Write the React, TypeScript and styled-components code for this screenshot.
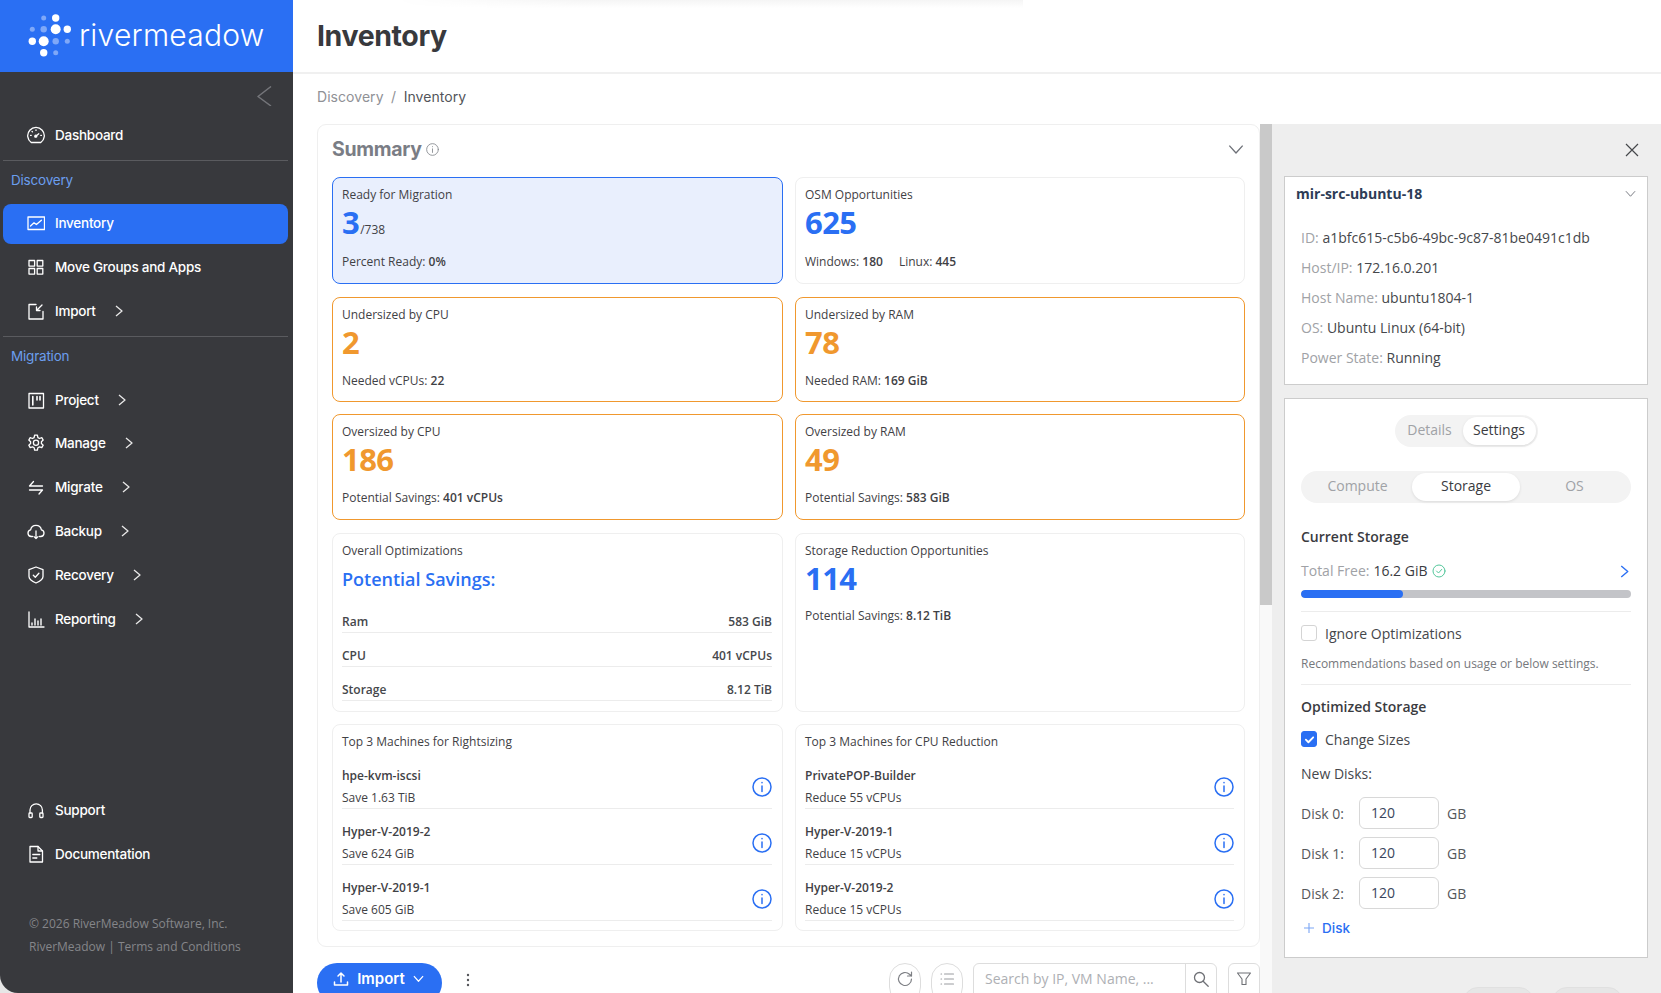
import React from 'react';
import styled, { createGlobalStyle } from 'styled-components';

const Global = createGlobalStyle`
  html, body { margin: 0; padding: 0; height: 100%; overflow: hidden; background: #e6e6e6; }
  * { box-sizing: border-box; }
  body { font-family: "Open Sans", "Liberation Sans", sans-serif; color: #3a3b3f; }
`;

const BLUE = '#2a6ff3';
const ORANGE = '#f0982e';

const Page = styled.div`
  display: flex;
  width: 1661px;
  height: 993px;
  overflow: hidden;
  background: #e6e6e6;
`;

const Sidebar = styled.aside`
  width: 293px;
  flex: none;
  height: 993px;
  background: #38393d;
  border-bottom-left-radius: 18px;
  display: flex;
  flex-direction: column;
  font-family: Inter, "Liberation Sans", sans-serif;
  overflow: hidden;
`;

const LogoBar = styled.div`
  height: 72px;
  flex: none;
  background: ${BLUE};
  display: flex;
  align-items: center;
  padding-left: 27px;
  gap: 6px;
`;

const LogoText = styled.span`
  font-family: Inter, "Liberation Sans", sans-serif;
  font-weight: 300;
  font-size: 30px;
  letter-spacing: 0.25px;
  color: #fff;
  line-height: 40px;
  margin-top: -2px;
`;

const CollapseRow = styled.div`
  height: 41px;
  flex: none;
  display: flex;
  justify-content: flex-end;
  align-items: center;
  padding-right: 16px;
  padding-top: 7px;
`;

const NavRow = styled.div<{ $active?: boolean }>`
  height: ${p => (p.$active ? '40px' : '43.8px')};
  flex: none;
  display: flex;
  align-items: center;
  margin: 0 5px ${p => (p.$active ? '1.3px' : '0')} 3px;
  padding: 0 0 ${p => (p.$active ? '1px' : '0')} 24px;
  border-radius: 8px;
  background: ${p => (p.$active ? BLUE : 'transparent')};
  color: #fff;
  font-size: 13.5px;
  font-weight: 500;
  letter-spacing: -0.25px;
`;

const NavIcon = styled.span`
  width: 18px;
  height: 18px;
  margin-right: 10px;
  display: flex;
  flex: none;
`;

const NavCaret = styled.span`
  margin-left: 17px;
  display: flex;
`;

const NavRule = styled.div`
  height: 1px;
  flex: none;
  background: #5a5b5f;
  margin: 3px 5px 0 3px;
`;

const SectionLabel = styled.div<{ $after: number }>`
  height: 36px;
  flex: none;
  display: flex;
  align-items: center;
  padding: 2px 0 0 11px;
  color: #6b9eee;
  font-size: 13.5px;
  letter-spacing: -0.2px;
  margin-bottom: ${p => p.$after}px;
`;

const SideBottom = styled.div`
  margin-top: auto;
  display: flex;
  flex-direction: column;
`;

const SideFooter = styled.div`
  margin-top: 37px;
  padding: 0 0 35px 29px;
  font-family: "Open Sans", "Liberation Sans", sans-serif;
  font-size: 12px;
  line-height: 22.5px;
  color: #85868a;
`;

const Main = styled.main`
  flex: 1;
  min-width: 0;
  display: flex;
  flex-direction: column;
  background: #fff;
  position: relative;
`;

const TopShade = styled.div`
  position: absolute;
  left: 100px;
  top: 0;
  width: 630px;
  height: 8px;
  background: linear-gradient(to bottom, #f5f5f5, #ffffff);
  mask-image: linear-gradient(to right, transparent, #000 30%);
`;

const TitleBar = styled.header`
  height: 74px;
  flex: none;
  border-bottom: 2px solid #f0f0f0;
  display: flex;
  align-items: center;
  padding: 0 0 2px 24px;
`;

const PageTitle = styled.h1`
  margin: 0;
  font-family: Inter, "Liberation Sans", sans-serif;
  font-weight: 700;
  font-size: 28.5px;
  letter-spacing: -0.4px;
  color: #38393d;
  position: relative;
`;

const Crumbs = styled.nav`
  height: 50px;
  flex: none;
  display: flex;
  align-items: center;
  padding: 0 0 6px 24px;
  font-family: Inter, "Liberation Sans", sans-serif;
  font-size: 14px;
  letter-spacing: 0.05px;
  gap: 7.5px;
  color: #8f9196;
`;

const CrumbNow = styled.span`
  color: #53555a;
`;

const Work = styled.div`
  flex: 1;
  min-height: 0;
  display: flex;
`;

const LeftCol = styled.div`
  width: 967px;
  flex: none;
  padding-left: 24px;
  display: flex;
  flex-direction: column;
`;

const SummaryCard = styled.section`
  height: 823px;
  flex: none;
  border: 1px solid #efefef;
  border-radius: 9px;
  padding: 0 14px;
`;

const SummaryHead = styled.div`
  height: 52px;
  display: flex;
  align-items: center;
  padding-bottom: 4px;
`;

const SummaryTitle = styled.h2`
  margin: 0 4px 0 0;
  font-family: Inter, "Liberation Sans", sans-serif;
  font-size: 19.5px;
  font-weight: 700;
  letter-spacing: -0.3px;
  color: #7a7d85;
`;

const HeadCaret = styled.span`
  margin-left: auto;
  display: flex;
  padding-right: 1px;
`;

const Grid = styled.div`
  display: grid;
  grid-template-columns: 451px 450px;
  grid-template-rows: 107px 105px 106px 179px 207px;
  column-gap: 12px;
  row-gap: 12.5px;
`;

const Tile = styled.div<{ $tone?: 'blue' | 'orange' }>`
  border: 1px solid ${p => (p.$tone === 'blue' ? BLUE : p.$tone === 'orange' ? ORANGE : '#efefef')};
  background: ${p => (p.$tone === 'blue' ? '#e9effd' : '#fff')};
  border-radius: 8px;
  padding: 8px 10px 0 9px;
  font-size: 12px;
  line-height: 18px;
  color: #3f4145;
`;

const TileLabel = styled.div`
  height: 18px;
`;

const BigNum = styled.div<{ $orange?: boolean }>`
  height: 40px;
  line-height: 36px;
  font-size: 31px;
  font-weight: 700;
  letter-spacing: -0.6px;
  color: ${p => (p.$orange ? ORANGE : BLUE)};
`;

const Small = styled.span`
  font-size: 12px;
  font-weight: 400;
  letter-spacing: 0;
  color: #3f4145;
  margin-left: 1px;
`;

const TileFoot = styled.div<{ $mt: number }>`
  margin-top: ${p => p.$mt}px;
  display: flex;
  gap: 16px;
  b { font-weight: 600; }
`;

const SavingsHead = styled.div`
  height: 40px;
  line-height: 38px;
  font-size: 18px;
  font-weight: 600;
  color: ${BLUE};
`;

const SavingRow = styled.div`
  height: 34px;
  border-bottom: 1px solid #ececec;
  display: flex;
  justify-content: space-between;
  align-items: flex-end;
  padding-bottom: 1px;
  font-weight: 600;
  color: #45474b;
`;

const SavingRows = styled.div`
  margin-top: -1px;
`;

const TopRow = styled.div`
  height: 56px;
  border-bottom: 1px solid #ececec;
  display: flex;
  justify-content: space-between;
  align-items: flex-start;
  padding-top: 12px;
`;

const TopList = styled.div`
  margin-top: 2px;
`;

const TopText = styled.div`
  line-height: 22px;
  b { display: block; font-weight: 600; }
`;

const TopInfo = styled.span`
  display: flex;
  margin-top: 12px;
`;

const Toolbar = styled.div`
  margin-top: 16px;
  height: 40px;
  flex: none;
  display: flex;
  align-items: flex-start;
`;

const ImportBtn = styled.button`
  width: 125px;
  height: 40px;
  border: 0;
  border-radius: 20px;
  background: ${BLUE};
  color: #fff;
  font-family: Inter, "Liberation Sans", sans-serif;
  font-size: 15px;
  font-weight: 600;
  display: flex;
  align-items: center;
  justify-content: center;
  gap: 8px;
  padding: 0 2px 9px 0;
`;

const Dots = styled.span`
  margin-left: 24px;
  margin-top: 9px;
  display: flex;
`;

const RoundBtn = styled.span<{ $first?: boolean }>`
  width: 32px;
  height: 40px;
  border: 1px solid #ddd;
  border-radius: 16px;
  display: flex;
  align-items: flex-start;
  justify-content: center;
  padding-top: 6px;
  margin-left: ${p => (p.$first ? 'auto' : '10px')};
`;

const SearchBox = styled.div`
  width: 244px;
  height: 40px;
  margin-left: 10px;
  border: 1px solid #ddd;
  border-radius: 6px;
  display: flex;
`;

const SearchInput = styled.input`
  width: 212px;
  height: 100%;
  border: 0;
  border-right: 1px solid #ddd;
  outline: 0;
  padding: 0 11px 9px;
  background: transparent;
  font-family: "Open Sans", "Liberation Sans", sans-serif;
  font-size: 14px;
  &::placeholder { color: #aeb0b4; opacity: 1; }
`;

const SearchIconWrap = styled.span`
  flex: 1;
  display: flex;
  justify-content: center;
  padding-top: 6px;
`;

const FilterBtn = styled.span`
  width: 32px;
  height: 40px;
  margin-left: 11px;
  border: 1px solid #ddd;
  border-radius: 6px;
  display: flex;
  justify-content: center;
  padding-top: 7px;
`;

const ScrollTrack = styled.div`
  width: 12px;
  flex: none;
  background: #f9f9f9;
`;

const ScrollThumb = styled.div`
  height: 481px;
  background: #c9c9c9;
`;

const Panel = styled.aside`
  flex: 1;
  background: #eeeeee;
  padding: 0 14px 0 12px;
  display: flex;
  flex-direction: column;
  font-size: 14px;
`;

const CloseRow = styled.div`
  height: 52px;
  flex: none;
  display: flex;
  justify-content: flex-end;
  align-items: center;
`;

const CloseIcon = styled.span`
  display: flex;
  margin-right: 9px;
`;

const InfoCard = styled.div`
  height: 209px;
  flex: none;
  background: #fff;
  border: 1px solid #ccc;
`;

const InfoHead = styled.div`
  display: flex;
  justify-content: space-between;
  align-items: center;
  height: 32px;
  padding: 0 11px 0 11px;
  font-weight: 700;
  font-size: 14px;
  color: #2d3c56;
`;

const InfoRows = styled.div`
  margin-top: 14px;
  padding-left: 16px;
`;

const InfoRow = styled.div`
  height: 30px;
  line-height: 30px;
  color: #45474b;
  white-space: nowrap;
  span { color: #a0a2a6; }
`;

const SettingsCard = styled.div`
  height: 560px;
  flex: none;
  margin-top: 13px;
  background: #fff;
  border: 1px solid #ccc;
  padding: 16px 16px 0;
`;

const Segment = styled.div<{ $wide?: boolean; $top?: number }>`
  display: ${p => (p.$wide ? 'grid' : 'flex')};
  ${p => (p.$wide ? 'grid-template-columns: 1fr 108px 1fr;' : '')}
  width: ${p => (p.$wide ? '330px' : '143px')};
  height: 32px;
  margin: ${p => p.$top ?? 0}px auto 0;
  padding: 2px;
  background: #f3f3f3;
  border-radius: 16px;
`;

const SegItem = styled.div<{ $on?: boolean; $w?: number }>`
  ${p => (p.$w ? `width: ${p.$w}px;` : '')}
  display: flex;
  align-items: center;
  justify-content: center;
  padding-bottom: 3px;
  border-radius: 14px;
  background: ${p => (p.$on ? '#fff' : 'transparent')};
  color: ${p => (p.$on ? '#3a3b3f' : '#a0a2a6')};
  box-shadow: ${p => (p.$on ? '0 1px 3px rgba(0,0,0,.1)' : 'none')};
`;

const Heading = styled.div<{ $top: number }>`
  height: 20px;
  line-height: 20px;
  margin-top: ${p => p.$top}px;
  font-weight: 600;
  color: #3a3b3f;
`;

const TotalRow = styled.div`
  height: 20px;
  line-height: 20px;
  margin-top: 14px;
  display: flex;
  align-items: center;
  color: #a0a2a6;
  b { font-weight: 400; color: #3a3b3f; margin-left: 4px; margin-right: 4px; }
`;

const TotalCaret = styled.span`
  margin-left: auto;
  display: flex;
`;

const Bar = styled.div`
  height: 8px;
  margin-top: 9px;
  border-radius: 4px;
  background: #c3c4c8;
  overflow: hidden;
`;

const BarFill = styled.div`
  height: 100%;
  border-radius: 4px;
  background: ${BLUE};
`;

const Rule = styled.div<{ $top: number }>`
  height: 1px;
  margin-top: ${p => p.$top}px;
  background: #ececec;
`;

const CheckRow = styled.div<{ $top: number }>`
  height: 20px;
  margin-top: ${p => p.$top}px;
  display: flex;
  align-items: center;
  gap: 8px;
  color: #45474b;
`;

const Check = styled.span<{ $on?: boolean }>`
  width: 16px;
  height: 16px;
  border-radius: 3px;
  border: 1px solid ${p => (p.$on ? BLUE : '#d4d4d4')};
  background: ${p => (p.$on ? BLUE : '#fff')};
  display: flex;
  align-items: center;
  justify-content: center;
`;

const Hint = styled.div`
  height: 18px;
  line-height: 18px;
  margin-top: 12px;
  font-size: 12px;
  color: #76787c;
`;

const FieldLabel = styled.div`
  height: 20px;
  line-height: 20px;
  margin-top: 15px;
  color: #45474b;
`;

const DiskRows = styled.div`
  margin-top: 13px;
  display: flex;
  flex-direction: column;
  gap: 8px;
`;

const DiskRow = styled.div`
  height: 32px;
  display: flex;
  align-items: center;
  color: #55575b;
`;

const DiskName = styled.span`
  width: 58px;
`;

const DiskInput = styled.input`
  width: 80px;
  height: 32px;
  border: 1px solid #d8d8d8;
  border-radius: 6px;
  padding: 0 11px 1px;
  margin-right: 8px;
  font-family: "Open Sans", "Liberation Sans", sans-serif;
  font-size: 14px;
  color: #39465c;
  outline: 0;
`;

const AddDisk = styled.div`
  height: 20px;
  margin-top: 9px;
  display: flex;
  align-items: center;
  gap: 7px;
  padding-left: 2px;
  font-family: Inter, "Liberation Sans", sans-serif;
  font-size: 13.5px;
  font-weight: 500;
  color: ${BLUE};
`;

const PanelButtons = styled.div`
  margin-top: 29px;
  display: flex;
  justify-content: flex-end;
  gap: 18px;
  padding-right: 25px;
`;

const PanelBtn = styled.span`
  width: 71px;
  height: 30px;
  border-radius: 15px;
  background: #e6e6e6;
  border: 1px solid #e0e0e0;
`;

type P = { children: React.ReactNode; size?: number; color?: string; sw?: number; box?: number };
const Ico = ({ children, size = 18, color = '#fff', sw = 1.3, box = 18 }: P) => (
  <svg width={size} height={size} viewBox={`0 0 ${box} ${box}`} fill="none" stroke={color} strokeWidth={sw} strokeLinecap="round" strokeLinejoin="round">
    {children}
  </svg>
);

const Logo = () => (
  <svg width="46" height="48" viewBox="27 12 46 48">
    <g fill="#fff">
      <circle cx="55.7" cy="18" r="3.7" />
      <circle cx="55.7" cy="29.3" r="5" />
      <circle cx="67.3" cy="29.3" r="3.7" />
      <circle cx="43.7" cy="41.3" r="5" />
      <circle cx="32.3" cy="41.3" r="3.7" />
      <circle cx="43.7" cy="52.7" r="3.7" />
    </g>
    <g fill="#7fa8f8">
      <circle cx="43.7" cy="18" r="2.5" />
      <circle cx="32.3" cy="29.3" r="2.5" />
      <circle cx="43.7" cy="29.3" r="3.2" />
      <circle cx="55.7" cy="41.3" r="3.2" />
      <circle cx="67.3" cy="41.3" r="2.5" />
      <circle cx="55.7" cy="52.7" r="2.5" />
    </g>
  </svg>
);

const Gauge = () => (
  <Ico>
    <path d="M4.2 16.5h9.6a8.3 8.3 0 1 0-9.6 0z" />
    <path d="M8.2 10.8l3.6-3" />
    <circle cx="8.8" cy="10.2" r="1" />
    <path d="M3.6 9.4h.6M9 3.8v.6M5 5.4l.4.4M13.8 9.4h.6" />
  </Ico>
);
const Chart = () => (
  <Ico>
    <rect x="1" y="3" width="16.5" height="12.5" />
    <path d="M3.5 12l3.5-3.2 2.4 1.8 5-4.4" />
  </Ico>
);
const Apps = () => (
  <Ico>
    <rect x="2" y="2.5" width="5.6" height="5.6" />
    <rect x="10.2" y="2.5" width="5.6" height="5.6" />
    <rect x="2" y="10.5" width="5.6" height="5.6" />
    <rect x="10.2" y="10.5" width="5.6" height="5.6" />
  </Ico>
);
const ImportIco = () => (
  <Ico>
    <path d="M9 2.5H2v14.5h14V9.5" />
    <path d="M15 3l-5.5 5.5M9.5 5v3.5H13" />
  </Ico>
);
const Board = () => (
  <Ico>
    <rect x="2" y="2.5" width="14.5" height="14.5" />
    <path d="M5.8 5.5v8.5M10 5.5v3.5M13 5.5v3.5" strokeWidth="1.6" />
  </Ico>
);
const Gear = () => (
  <Ico>
    <path d="M7.6 1.2h2.8l.5 2.4 1.6.9 2.3-.8 1.4 2.4-1.8 1.6v1.9l1.8 1.6-1.4 2.4-2.3-.8-1.6.9-.5 2.4H7.6l-.5-2.4-1.6-.9-2.3.8-1.4-2.4 1.8-1.6V7.7L1.8 6.1l1.4-2.4 2.3.8 1.6-.9z" />
    <circle cx="9" cy="8.7" r="2.6" />
  </Ico>
);
const Swap = () => (
  <Ico>
    <path d="M2.5 8h13M2.5 8l4-4.5M2.5 12h13M15.5 12l-3.5 4" />
  </Ico>
);
const Cloud = () => (
  <Ico>
    <path d="M5.5 14.5H4.2A3.4 3.4 0 0 1 3.6 7.8a5.5 5.5 0 0 1 10.8 0 3.4 3.4 0 0 1-.6 6.7h-1.3" />
    <path d="M9 9v7.5M7 14.6l2 2 2-2" />
  </Ico>
);
const Shield = () => (
  <Ico>
    <path d="M9 1l7 2.6v7c0 2.8-3.4 5-7 6.4-3.6-1.4-7-3.6-7-6.4v-7z" />
    <path d="M6.3 9.3l2 2 3.6-4" />
  </Ico>
);
const Bars = () => (
  <Ico>
    <path d="M2 2v15h15" />
    <path d="M5 15v-2M8 15V9M11 15v-4M14 15V9" strokeWidth="1.4" />
  </Ico>
);
const Phones = () => (
  <Ico>
    <path d="M3 12V9a6.2 6.2 0 0 1 12.4 0v3" />
    <rect x="2" y="12" width="3.2" height="4.5" rx=".8" />
    <rect x="12.8" y="12" width="3.2" height="4.5" rx=".8" />
  </Ico>
);
const Doc = () => (
  <Ico>
    <path d="M3 1.5h8l4.5 4.5v11H3z" />
    <path d="M11 1.5V6h4.5M5.8 9.5h7M5.8 13h4" />
  </Ico>
);
const Caret = ({ dir = 'right', color = '#fff', size = 12, sw = 1.3 }: { dir?: string; color?: string; size?: number; sw?: number }) => {
  const d = dir === 'right' ? 'M3 1l6 5-6 5' : dir === 'left' ? 'M9 1L3 6l6 5' : 'M1 3.5l5 5.5 5-5.5';
  return <Ico size={size} box={12} color={color} sw={sw}><path d={d} strokeLinecap="butt" /></Ico>;
};
const InfoCircle = ({ size = 20, color = BLUE, sw = 1.5 }: { size?: number; color?: string; sw?: number }) => (
  <Ico size={size} box={20} color={color} sw={sw}>
    <circle cx="10" cy="10" r="9" />
    <path d="M10 9v5.5" />
    <path d="M10 5.6v.2" />
  </Ico>
);

const navA = [
  { icon: <Apps />, label: 'Move Groups and Apps' },
  { icon: <ImportIco />, label: 'Import', caret: true },
];
const navB = [
  { icon: <Board />, label: 'Project' },
  { icon: <Gear />, label: 'Manage' },
  { icon: <Swap />, label: 'Migrate' },
  { icon: <Cloud />, label: 'Backup' },
  { icon: <Shield />, label: 'Recovery' },
  { icon: <Bars />, label: 'Reporting' },
];

const Nav = ({ icon, label, caret, active }: { icon: React.ReactNode; label: string; caret?: boolean; active?: boolean }) => (
  <NavRow $active={active}>
    <NavIcon>{icon}</NavIcon>
    {label}
    {caret && <NavCaret><Caret color="#e8e8e8" /></NavCaret>}
  </NavRow>
);

const Stat = ({ label, value, foot, orange, sub, mt = 8 }: { label: string; value: string; foot: React.ReactNode; orange?: boolean; sub?: string; mt?: number }) => (
  <>
    <TileLabel>{label}</TileLabel>
    <BigNum $orange={orange}>{value}{sub && <Small>{sub}</Small>}</BigNum>
    <TileFoot $mt={mt}>{foot}</TileFoot>
  </>
);

const TopTile = ({ title, rows }: { title: string; rows: [string, string][] }) => (
  <Tile>
    <TileLabel>{title}</TileLabel>
    <TopList>
      {rows.map(([a, b]) => (
        <TopRow key={a}>
          <TopText><b>{a}</b>{b}</TopText>
          <TopInfo><InfoCircle /></TopInfo>
        </TopRow>
      ))}
    </TopList>
  </Tile>
);

export default function App() {
  return (
    <Page>
      <Global />
      <Sidebar>
        <LogoBar>
          <Logo />
          <LogoText>rivermeadow</LogoText>
        </LogoBar>
        <CollapseRow>
          <Ico size={20} box={20} color="#74757a" sw={1.5}><path d="M14 .5L1 10.5 14 20" strokeLinecap="butt" /></Ico>
        </CollapseRow>
        <Nav icon={<Gauge />} label="Dashboard" />
        <NavRule />
        <SectionLabel $after={7}>Discovery</SectionLabel>
        <Nav icon={<Chart />} label="Inventory" active />
        <Nav {...navA[0]} />
        <Nav {...navA[1]} />
        <NavRule />
        <SectionLabel $after={5}>Migration</SectionLabel>
        {navB.map(n => <Nav key={n.label} icon={n.icon} label={n.label} caret />)}
        <SideBottom>
          <Nav icon={<Phones />} label="Support" />
          <Nav icon={<Doc />} label="Documentation" />
          <SideFooter>
            © 2026 RiverMeadow Software, Inc.<br />
            RiverMeadow | Terms and Conditions
          </SideFooter>
        </SideBottom>
      </Sidebar>

      <Main>
        <TopShade />
        <TitleBar><PageTitle>Inventory</PageTitle></TitleBar>
        <Crumbs>Discovery<span>/</span><CrumbNow>Inventory</CrumbNow></Crumbs>
        <Work>
          <LeftCol>
            <SummaryCard>
              <SummaryHead>
                <SummaryTitle>Summary</SummaryTitle>
                <InfoCircle size={13} color="#8a8d93" sw={1.4} />
                <HeadCaret><Caret dir="down" color="#6e7178" size={16} sw={1} /></HeadCaret>
              </SummaryHead>
              <Grid>
                <Tile $tone="blue">
                  <Stat mt={9} label="Ready for Migration" value="3" sub="/738" foot={<span>Percent Ready: <b>0%</b></span>} />
                </Tile>
                <Tile>
                  <Stat mt={9} label="OSM Opportunities" value="625" foot={<><span>Windows: <b>180</b></span><span>Linux: <b>445</b></span></>} />
                </Tile>
                <Tile $tone="orange">
                  <Stat orange label="Undersized by CPU" value="2" foot={<span>Needed vCPUs: <b>22</b></span>} />
                </Tile>
                <Tile $tone="orange">
                  <Stat orange label="Undersized by RAM" value="78" foot={<span>Needed RAM: <b>169 GiB</b></span>} />
                </Tile>
                <Tile $tone="orange">
                  <Stat orange label="Oversized by CPU" value="186" foot={<span>Potential Savings: <b>401 vCPUs</b></span>} />
                </Tile>
                <Tile $tone="orange">
                  <Stat orange label="Oversized by RAM" value="49" foot={<span>Potential Savings: <b>583 GiB</b></span>} />
                </Tile>
                <Tile>
                  <TileLabel>Overall Optimizations</TileLabel>
                  <SavingsHead>Potential Savings:</SavingsHead>
                  <SavingRows>
                    <SavingRow><span>Ram</span><span>583 GiB</span></SavingRow>
                    <SavingRow><span>CPU</span><span>401 vCPUs</span></SavingRow>
                    <SavingRow><span>Storage</span><span>8.12 TiB</span></SavingRow>
                  </SavingRows>
                </Tile>
                <Tile>
                  <Stat mt={7} label="Storage Reduction Opportunities" value="114" foot={<span>Potential Savings: <b>8.12 TiB</b></span>} />
                </Tile>
                <TopTile title="Top 3 Machines for Rightsizing" rows={[['hpe-kvm-iscsi', 'Save 1.63 TiB'], ['Hyper-V-2019-2', 'Save 624 GiB'], ['Hyper-V-2019-1', 'Save 605 GiB']]} />
                <TopTile title="Top 3 Machines for CPU Reduction" rows={[['PrivatePOP-Builder', 'Reduce 55 vCPUs'], ['Hyper-V-2019-1', 'Reduce 15 vCPUs'], ['Hyper-V-2019-2', 'Reduce 15 vCPUs']]} />
              </Grid>
            </SummaryCard>
            <Toolbar>
              <ImportBtn>
                <Ico size={16} box={16} sw={1.5}><path d="M8 11V2M5 5l3-3 3 3M1.5 11v3h13v-3" /></Ico>
                Import
                <Caret dir="down" size={11} />
              </ImportBtn>
              <Dots>
                <svg width="4" height="16" viewBox="0 0 4 16" fill="#55575b"><circle cx="2" cy="3" r="1.2" /><circle cx="2" cy="8" r="1.2" /><circle cx="2" cy="13" r="1.2" /></svg>
              </Dots>
              <RoundBtn $first>
                <Ico size={18} color="#7d7f84" sw={1.2}><path d="M15.5 9a6.5 6.5 0 1 1-2-4.7L15.5 6M15.5 2v4h-4" /></Ico>
              </RoundBtn>
              <RoundBtn>
                <Ico size={18} color="#9a9ca0" sw={1.1}><path d="M6.5 4h9M6.5 9h9M6.5 14h9M3 4h.6M3 9h.6M3 14h.6" /></Ico>
              </RoundBtn>
              <SearchBox>
                <SearchInput placeholder="Search by IP, VM Name, ..." readOnly />
                <SearchIconWrap>
                  <Ico size={18} color="#6f7176" sw={1.3}><circle cx="7.5" cy="7.5" r="5" /><path d="M11.2 11.2l5 5" /></Ico>
                </SearchIconWrap>
              </SearchBox>
              <FilterBtn>
                <Ico size={16} box={16} color="#6f7176" sw={1.1}><path d="M1.5 2h13l-4.5 6v5.5H6V8z" /></Ico>
              </FilterBtn>
            </Toolbar>
          </LeftCol>
          <ScrollTrack><ScrollThumb /></ScrollTrack>
          <Panel>
            <CloseRow>
              <CloseIcon><Ico size={14} box={14} color="#45474b" sw={1.2}><path d="M1 1l12 12M13 1L1 13" strokeLinecap="butt" /></Ico></CloseIcon>
            </CloseRow>
            <InfoCard>
              <InfoHead>mir-src-ubuntu-18<Caret dir="down" color="#6e7178" size={11} sw={1} /></InfoHead>
              <InfoRows>
                <InfoRow><span>ID:</span> a1bfc615-c5b6-49bc-9c87-81be0491c1db</InfoRow>
                <InfoRow><span>Host/IP:</span> 172.16.0.201</InfoRow>
                <InfoRow><span>Host Name:</span> ubuntu1804-1</InfoRow>
                <InfoRow><span>OS:</span> Ubuntu Linux (64-bit)</InfoRow>
                <InfoRow><span>Power State:</span> Running</InfoRow>
              </InfoRows>
            </InfoCard>
            <SettingsCard>
              <Segment>
                <SegItem $w={66}>Details</SegItem>
                <SegItem $on $w={73}>Settings</SegItem>
              </Segment>
              <Segment $wide $top={24}>
                <SegItem>Compute</SegItem>
                <SegItem $on>Storage</SegItem>
                <SegItem>OS</SegItem>
              </Segment>
              <Heading $top={24}>Current Storage</Heading>
              <TotalRow>
                Total Free: <b>16.2 GiB</b>
                <Ico size={14} box={14} color="#53c79b" sw={1}><circle cx="7" cy="7" r="6" /><path d="M4.5 7l2 2 3.2-3.6" /></Ico>
                <TotalCaret><Caret color={BLUE} size={13} /></TotalCaret>
              </TotalRow>
              <Bar><BarFill style={{ width: '31%' }} /></Bar>
              <Rule $top={13} />
              <CheckRow $top={11}><Check />Ignore Optimizations</CheckRow>
              <Hint>Recommendations based on usage or below settings.</Hint>
              <Rule $top={11} />
              <Heading $top={12}>Optimized Storage</Heading>
              <CheckRow $top={12}>
                <Check $on><Ico size={11} box={12} sw={2}><path d="M2 6.2l2.8 2.8L10 3.6" /></Ico></Check>
                Change Sizes
              </CheckRow>
              <FieldLabel>New Disks:</FieldLabel>
              <DiskRows>
                {['Disk 0:', 'Disk 1:', 'Disk 2:'].map(d => (
                  <DiskRow key={d}><DiskName>{d}</DiskName><DiskInput defaultValue="120" readOnly />GB</DiskRow>
                ))}
              </DiskRows>
              <AddDisk>
                <Ico size={12} box={12} color="#7aa5f5" sw={1.1}><path d="M6 1v10M1 6h10" strokeLinecap="butt" /></Ico>
                Disk
              </AddDisk>
            </SettingsCard>
            <PanelButtons><PanelBtn /><PanelBtn /></PanelButtons>
          </Panel>
        </Work>
      </Main>
    </Page>
  );
}
